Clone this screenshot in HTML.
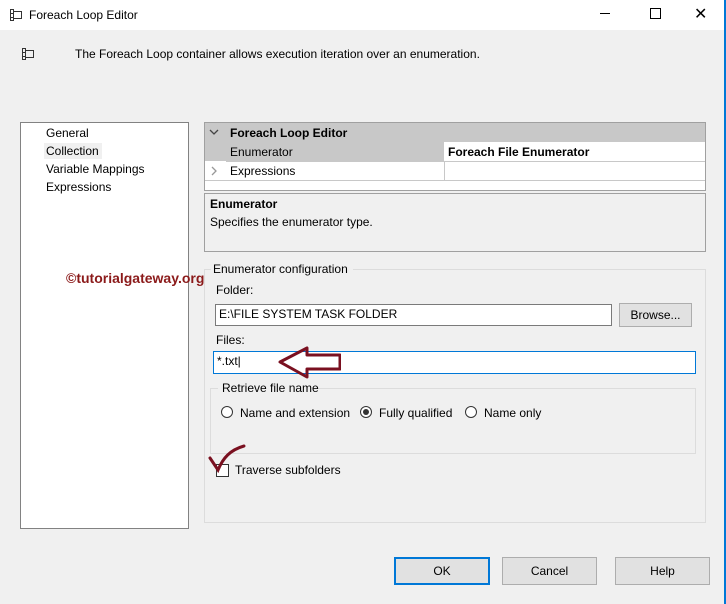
<!DOCTYPE html><html><head><style>
body{margin:0;width:726px;height:604px;background:#f0f0f0;font-family:"Liberation Sans",sans-serif;font-size:12px;color:#000;position:relative;overflow:hidden}
.a{position:absolute}
.btn{position:absolute;background:#e1e1e1;border:1px solid #adadad;text-align:center;line-height:25px;box-sizing:border-box}
.inp{position:absolute;background:#fff;border:1px solid #7a7a7a;box-sizing:border-box;padding-left:3px;line-height:19px}
.rad{position:absolute;width:12px;height:12px;border:1px solid #333;border-radius:50%;box-sizing:border-box;background:#fff}
</style></head><body>
<div class="a" style="left:0;top:0;width:726px;height:30px;background:#fff"></div>
<svg class="a" style="left:9px;top:8px" width="14" height="14"><path d="M1.5 1.5h3v11h-3zM4.5 3.5h8v7h-8M1.5 5.5h3M1.5 9.5h3" fill="none" stroke="#333"/></svg>
<div class="a" style="left:29px;top:8px;font-size:12px">Foreach Loop Editor</div>
<div class="a" style="left:600px;top:13px;width:10px;height:1px;background:#000"></div>
<div class="a" style="left:650px;top:8px;width:9px;height:9px;border:1px solid #000"></div>
<div class="a" style="left:694px;top:4px;font-size:16px">✕</div>
<svg class="a" style="left:21px;top:47px" width="14" height="14"><path d="M1.5 1.5h3v11h-3zM4.5 3.5h8v7h-8M1.5 5.5h3M1.5 9.5h3" fill="none" stroke="#333"/></svg>
<div class="a" style="left:75px;top:47px">The Foreach Loop container allows execution iteration over an enumeration.</div>
<div class="a" style="left:20px;top:122px;width:169px;height:407px;background:#fff;border:1px solid #828282;box-sizing:border-box"></div>
<div class="a" style="left:46px;top:126px">General</div>
<div class="a" style="left:44px;top:143px;width:58px;height:16px;background:#f0f0f0"></div>
<div class="a" style="left:46px;top:144px">Collection</div>
<div class="a" style="left:46px;top:162px">Variable Mappings</div>
<div class="a" style="left:46px;top:180px">Expressions</div>
<div class="a" style="left:204px;top:122px;width:502px;height:69px;background:#fff;border:1px solid #a0a0a0;box-sizing:border-box"></div>
<div class="a" style="left:205px;top:123px;width:500px;height:19px;background:#c8c8c8"></div>
<div class="a" style="left:205px;top:142px;width:239px;height:19px;background:#c8c8c8"></div>
<div class="a" style="left:444px;top:161px;width:1px;height:19px;background:#c8c8c8"></div>
<div class="a" style="left:226px;top:161px;width:479px;height:1px;background:#c8c8c8"></div>
<div class="a" style="left:205px;top:180px;width:500px;height:1px;background:#c8c8c8"></div>
<svg class="a" style="left:209px;top:128px" width="10" height="8"><path d="M1 2l4 4 4-4" fill="none" stroke="#444" stroke-width="1.3"/></svg>
<div class="a" style="left:230px;top:126px;font-weight:bold">Foreach Loop Editor</div>
<div class="a" style="left:230px;top:145px">Enumerator</div>
<div class="a" style="left:448px;top:145px;font-weight:bold">Foreach File Enumerator</div>
<svg class="a" style="left:210px;top:166px" width="8" height="10"><path d="M2 1l4 4-4 4" fill="none" stroke="#999" stroke-width="1.3"/></svg>
<div class="a" style="left:230px;top:164px">Expressions</div>
<div class="a" style="left:204px;top:193px;width:502px;height:59px;border:1px solid #a0a0a0;box-sizing:border-box"></div>
<div class="a" style="left:210px;top:197px;font-weight:bold">Enumerator</div>
<div class="a" style="left:210px;top:215px">Specifies the enumerator type.</div>
<div class="a" style="left:204px;top:269px;width:502px;height:254px;border:1px solid #dcdcdc;box-sizing:border-box"></div>
<div class="a" style="left:211px;top:262px;width:142px;height:14px;background:#f0f0f0"></div>
<div class="a" style="left:213px;top:262px">Enumerator configuration</div>
<div class="a" style="left:66px;top:270px;font-weight:bold;color:#8b1a1a;font-size:14px">©tutorialgateway.org</div>
<div class="a" style="left:216px;top:283px">Folder:</div>
<div class="inp" style="left:215px;top:304px;width:397px;height:22px">E:\FILE SYSTEM TASK FOLDER</div>
<div class="btn" style="left:619px;top:303px;width:73px;height:24px;line-height:22px">Browse...</div>
<div class="a" style="left:216px;top:333px">Files:</div>
<div class="inp" style="left:213px;top:351px;width:483px;height:23px;border-color:#0078d7">*.txt|</div>
<svg class="a" style="left:275px;top:345px" width="66" height="34"><path d="M5 17L32 3v7h33v14H32v8z" fill="none" stroke="#7a1020" stroke-width="3" stroke-linejoin="round"/></svg>
<div class="a" style="left:210px;top:388px;width:486px;height:66px;border:1px solid #dcdcdc;box-sizing:border-box"></div>
<div class="a" style="left:218px;top:381px;width:100px;height:14px;background:#f0f0f0"></div>
<div class="a" style="left:222px;top:381px">Retrieve file name</div>
<div class="rad" style="left:221px;top:406px"></div><div class="a" style="left:240px;top:406px">Name and extension</div>
<div class="rad" style="left:360px;top:406px"></div><div class="a" style="left:363px;top:409px;width:6px;height:6px;border-radius:50%;background:#333"></div><div class="a" style="left:379px;top:406px">Fully qualified</div>
<div class="rad" style="left:465px;top:406px"></div><div class="a" style="left:484px;top:406px">Name only</div>
<div class="a" style="left:216px;top:464px;width:13px;height:13px;border:1px solid #333;box-sizing:border-box;background:#fff"></div>
<svg class="a" style="left:207px;top:443px" width="45" height="30"><path d="M3 15l8 12c5-12 12-20 26-24" fill="none" stroke="#7a1020" stroke-width="3" stroke-linecap="round"/></svg>
<div class="a" style="left:235px;top:463px">Traverse subfolders</div>
<div class="btn" style="left:394px;top:557px;width:96px;height:28px;border:2px solid #0078d7">OK</div>
<div class="btn" style="left:502px;top:557px;width:95px;height:28px;line-height:26px">Cancel</div>
<div class="btn" style="left:615px;top:557px;width:95px;height:28px;line-height:26px">Help</div>
<div class="a" style="left:724px;top:0;width:2px;height:604px;background:#0078d7"></div>
</body></html>
